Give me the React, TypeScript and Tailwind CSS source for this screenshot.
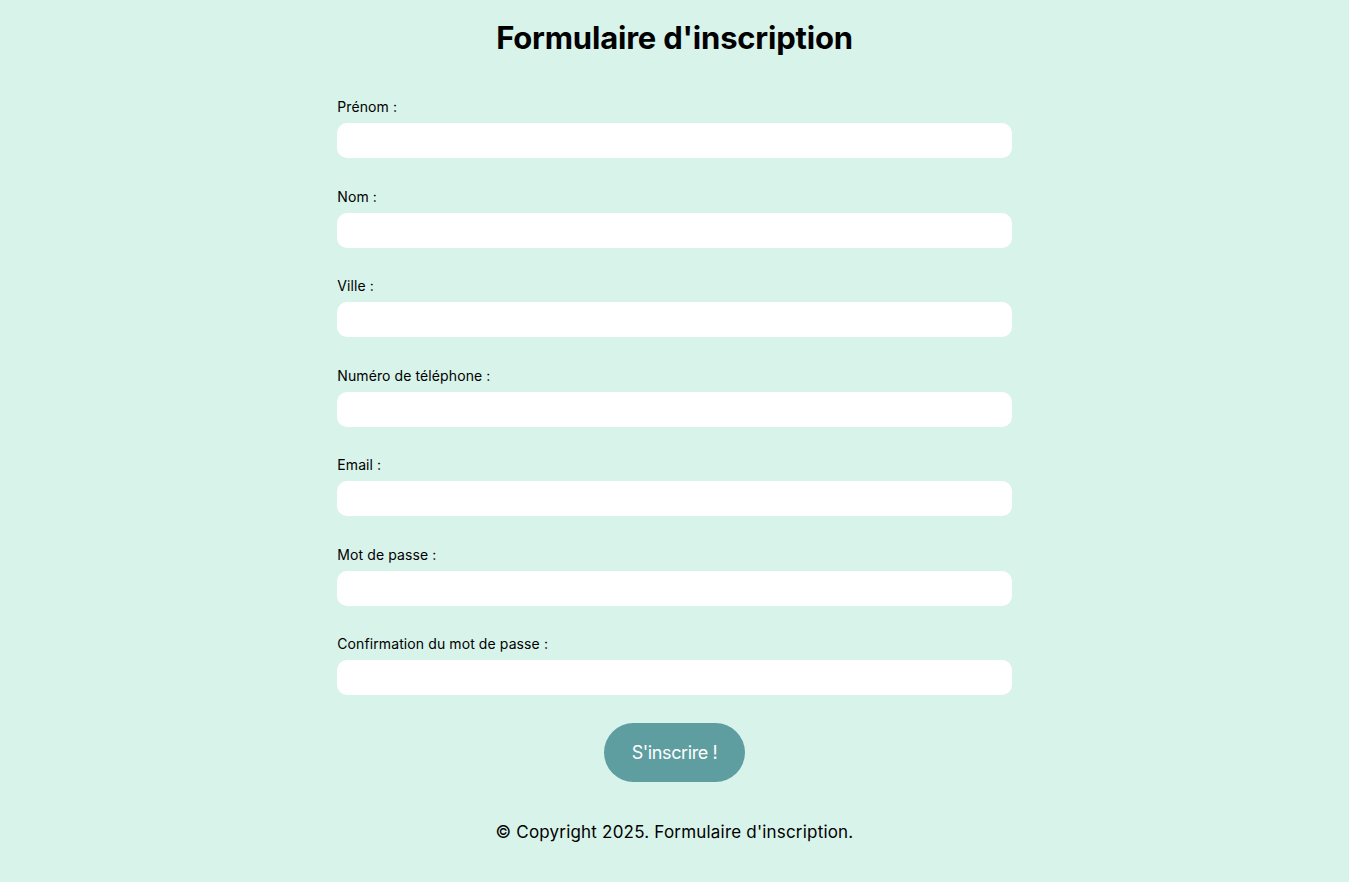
const fields = [
  "Prénom :",
  "Nom :",
  "Ville :",
  "Numéro de téléphone :",
  "Email :",
  "Mot de passe :",
  "Confirmation du mot de passe :",
];

const App = () => {
  return (
    <div className="flex min-h-[882px] w-full flex-col items-center bg-[#d8f3ea] font-['Inter',sans-serif] text-black">
      <h1 className="mt-[18px] text-[31px] font-bold leading-10 tracking-[-0.2px]">
        Formulaire d'inscription
      </h1>
      <form className="mt-[39px] flex w-1/2 flex-col gap-[28.5px]">
        {fields.map((label) => (
          <div key={label} className="flex flex-col">
            <label className="text-[14px] leading-5 tracking-[0.1px]">{label}</label>
            <input
              type="text"
              className="mt-[6px] h-[35px] w-full rounded-[10px] bg-white px-3 outline-none"
            />
          </div>
        ))}
      </form>
      <button className="mt-[28px] h-[59px] w-[141px] rounded-full bg-[#5f9ea0] text-[18px] tracking-[-0.4px] text-white">
        S'inscrire !
      </button>
      <footer className="mt-[38px] text-[17px] leading-6 tracking-[0.2px]">
        © Copyright 2025. Formulaire d'inscription.
      </footer>
    </div>
  );
};

export default App;
